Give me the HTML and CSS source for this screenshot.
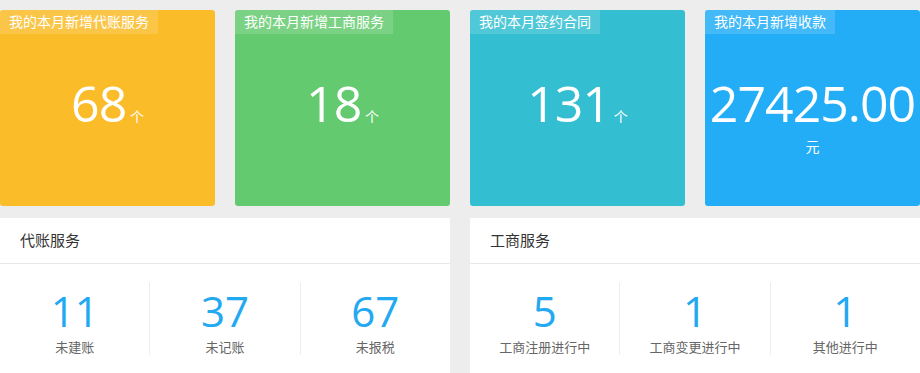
FILE: index.html
```html
<!DOCTYPE html>
<html lang="zh-CN">
<head>
  <meta charset="UTF-8">
  <meta name="viewport" content="width=device-width, initial-scale=1.0">
  <title>工作台</title>
  <link rel="stylesheet" href="styles.css">
</head>
<body>
  <div class="cards">
    <div class="card yellow">
      <div class="card-title">我的本月新增代账服务</div>
      <div class="card-value"><span class="num">68</span> <span class="unit">个</span></div>
    </div>
    <div class="card green">
      <div class="card-title">我的本月新增工商服务</div>
      <div class="card-value"><span class="num">18</span> <span class="unit">个</span></div>
    </div>
    <div class="card teal">
      <div class="card-title">我的本月签约合同</div>
      <div class="card-value"><span class="num">131</span> <span class="unit">个</span></div>
    </div>
    <div class="card blue">
      <div class="card-title">我的本月新增收款</div>
      <div class="card-value"><span class="num">27425.00</span> <span class="unit">元</span></div>
    </div>
  </div>

  <div class="panels">
    <div class="panel">
      <div class="panel-head">代账服务</div>
      <div class="stats">
        <div class="stat"><div class="stat-num">11</div><div class="stat-label">未建账</div></div>
        <div class="stat"><div class="stat-num">37</div><div class="stat-label">未记账</div></div>
        <div class="stat"><div class="stat-num">67</div><div class="stat-label">未报税</div></div>
      </div>
    </div>
    <div class="panel">
      <div class="panel-head">工商服务</div>
      <div class="stats">
        <div class="stat"><div class="stat-num">5</div><div class="stat-label">工商注册进行中</div></div>
        <div class="stat"><div class="stat-num">1</div><div class="stat-label">工商变更进行中</div></div>
        <div class="stat"><div class="stat-num">1</div><div class="stat-label">其他进行中</div></div>
      </div>
    </div>
  </div>
</body>
</html>
```

FILE: styles.css
```css
body {
  margin: 0;
  padding: 10px 0 0 0;
  background-color: #ededed;
  font-family: "Open Sans", "Noto Sans CJK SC", sans-serif;
  overflow: hidden;
}

.cards {
  display: flex;
  gap: 20px;
}

.card {
  width: 215px;
  height: 196px;
  flex-shrink: 0;
  border-radius: 3px;
  color: #fff;
  overflow: hidden;
}

.yellow { background-color: #fbbc29; }
.green { background-color: #64ca6f; }
.teal { background-color: #33bfd1; }
.blue { background-color: #23adf7; }

.card-title {
  display: inline-block;
  height: 24px;
  line-height: 24px;
  padding: 0 9px;
  font-size: 14px;
  background-color: rgba(255, 255, 255, 0.15);
}

.card-value {
  margin-top: 35px;
  text-align: center;
  font-size: 14px;
  line-height: 19px;
}

.card-value .num {
  font-size: 50px;
  line-height: 68px;
  letter-spacing: -1px;
}

.panels {
  display: flex;
  gap: 20px;
  margin-top: 12px;
}

.panel {
  width: 450px;
  height: 160px;
  flex-shrink: 0;
  background-color: #fff;
}

.panel-head {
  height: 45px;
  line-height: 45px;
  padding-left: 20px;
  font-size: 15px;
  color: #333;
  border-bottom: 1px solid #e8e8e8;
}

.stats {
  display: flex;
  margin-top: 18px;
}

.stat {
  flex: 1;
  text-align: center;
  border-left: 1px solid #eee;
}

.stat:first-child {
  border-left: none;
}

.stat-num {
  font-size: 42px;
  line-height: 57px;
  color: #22a9f2;
}

.stat-label {
  font-size: 13px;
  line-height: 16px;
  color: #666;
}
```
